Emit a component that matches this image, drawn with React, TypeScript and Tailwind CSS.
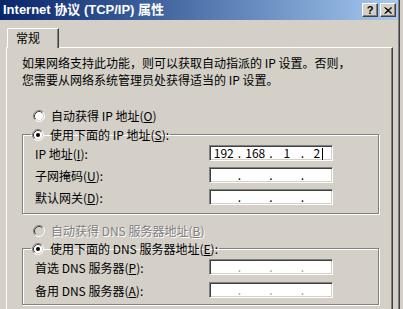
import React from "react";

const cjk = { fontFamily: '"Noto Sans CJK SC", "Liberation Sans", sans-serif' };

const Radio = ({ checked = false, disabled = false }: { checked?: boolean; disabled?: boolean }) => (
  <svg width="12" height="12" viewBox="0 0 12 12" className="shrink-0">
    <circle cx="6" cy="6" r="5" fill={disabled ? "#d4d0c8" : "#fff"} />
    <path d="M2.11 9.89 A5.5 5.5 0 0 1 9.89 2.11" stroke="#808080" fill="none" />
    <path d="M9.89 2.11 A5.5 5.5 0 0 1 2.11 9.89" stroke="#fff" fill="none" />
    <path d="M2.82 9.18 A4.5 4.5 0 0 1 9.18 2.82" stroke="#404040" fill="none" />
    <path d="M9.18 2.82 A4.5 4.5 0 0 1 2.82 9.18" stroke="#d4d0c8" fill="none" />
    {checked && <circle cx="6" cy="6" r="2" fill="#000" />}
  </svg>
);

const IpBox = ({ parts, cursor = false, dim = false }: { parts?: string[]; cursor?: boolean; dim?: boolean }) => {
  const p = parts ?? ["", "", "", ""];
  return (
    <div className="w-[124px] h-[16px] bg-white border-t border-l border-[#808080] border-b border-r border-b-white border-r-white shadow-[inset_1px_1px_0_#404040,inset_-1px_-1px_0_#d4d0c8] flex items-center text-[12px] leading-[14px] text-black">
      {p.map((v, i) => (
        <React.Fragment key={i}>
          <span className="flex-1 text-center relative">
            {v}
            {cursor && i === 3 && <span className="inline-block w-px h-[12px] bg-black align-middle ml-[2px]" />}
          </span>
          {i < 3 && <span className={"w-[4px] text-center " + (dim ? "text-[#a0a0a0]" : "")}>.</span>}
        </React.Fragment>
      ))}
    </div>
  );
};

const Row = ({ label, children }: { label: React.ReactNode; children: React.ReactNode }) => (
  <div className="flex items-center h-[16px]">
    <span className="w-[174px] text-[12px] leading-[15px]">{label}</span>
    {children}
  </div>
);

const Group = ({ legend, children, className }: { legend: React.ReactNode; children: React.ReactNode; className: string }) => (
  <fieldset className={"w-[357px] border border-[#808080] shadow-[1px_1px_0_#fff,inset_1px_1px_0_#fff] px-[12px] " + className}>
    <legend className="-ml-[4px] px-[1px] flex items-center gap-[6px] text-[12px] leading-[15px]">
      <Radio checked />
      <span>{legend}</span>
    </legend>
    {children}
  </fieldset>
);

export default function App() {
  return (
    <div className="w-[403px] h-[309px] overflow-hidden bg-[#d4d0c8] flex text-black" style={cjk}>
      <div className="w-[398px] flex flex-col">
        <div className="h-[20px] shrink-0 flex items-center justify-between pl-[3px] pr-[2px] bg-gradient-to-r from-[#0a246a] to-[#a6caf0]">
          <span className="text-white font-bold text-[13px] leading-[16px]" style={{ fontFamily: '"Liberation Sans", "Noto Sans CJK SC", sans-serif' }}>
            Internet 协议 (TCP/IP) 属性
          </span>
          <div className="flex gap-[2px]">
            <div className="w-[16px] h-[14px] bg-[#d4d0c8] border-t border-l border-white border-b border-r border-b-[#404040] border-r-[#404040] shadow-[inset_-1px_-1px_0_#808080] flex items-center justify-center text-[11px] leading-[11px] font-bold" style={{ fontFamily: '"Liberation Sans", sans-serif' }}>
              ?
            </div>
            <div className="w-[16px] h-[14px] bg-[#d4d0c8] border-t border-l border-white border-b border-r border-b-[#404040] border-r-[#404040] shadow-[inset_-1px_-1px_0_#808080] flex items-center justify-center">
              <svg width="8" height="7" viewBox="0 0 8 7">
                <path d="M0.5 0.5 L7 6.5 M1.5 0.5 L8 6.5 M7 0.5 L0.5 6.5 M8 0.5 L1.5 6.5" stroke="#000" strokeWidth="1" />
              </svg>
            </div>
          </div>
        </div>

        <div className="pl-[6px] pt-[7px] flex flex-col">
          <div className="flex h-[20px] items-end">
            <div className="ml-[1px] -mb-px z-10 w-[52px] h-[20px] bg-[#d4d0c8] border-t border-l border-white border-r border-r-[#404040] shadow-[inset_-1px_0_0_#808080] rounded-tl-[2px] pl-[8px] pt-[1px] text-[12px] leading-[15px]">
              常规
            </div>
          </div>
          <div className="w-[387px] h-[270px] border-t border-l border-white border-r border-r-[#404040] shadow-[inset_-1px_0_0_#808080] pl-[15px] pt-[6px] flex flex-col">
            <div className="text-[12px] leading-[17px] flex flex-col">
              <span>如果网络支持此功能，则可以获取自动指派的 IP 设置。否则，</span>
              <span>您需要从网络系统管理员处获得适当的 IP 设置。</span>
            </div>

            <div className="mt-[20px] ml-[11px] flex items-center gap-[6px] h-[15px] text-[12px] leading-[15px]">
              <Radio />
              <span>自动获得 IP 地址(<u>O</u>)</span>
            </div>

            <Group legend={<>使用下面的 IP 地址(<u>S</u>):</>} className="mt-[4px] pt-[3px] pb-[8px]">
              <div className="flex flex-col gap-[6px]">
                <Row label={<>IP 地址(<u>I</u>):</>}>
                  <IpBox parts={["192", "168", "1", "2"]} cursor />
                </Row>
                <Row label={<>子网掩码(<u>U</u>):</>}>
                  <IpBox />
                </Row>
                <Row label={<>默认网关(<u>D</u>):</>}>
                  <IpBox />
                </Row>
              </div>
            </Group>

            <div className="mt-[9px] ml-[11px] flex items-center gap-[6px] h-[15px] text-[12px] leading-[15px] text-[#808080] [text-shadow:1px_1px_0_#fff]">
              <Radio disabled />
              <span>自动获得 DNS 服务器地址(<u>B</u>)</span>
            </div>

            <Group legend={<>使用下面的 DNS 服务器地址(<u>E</u>):</>} className="mt-[3px] pt-[3px] pb-[6px]">
              <div className="flex flex-col gap-[7px]">
                <Row label={<>首选 DNS 服务器(<u>P</u>):</>}>
                  <IpBox dim />
                </Row>
                <Row label={<>备用 DNS 服务器(<u>A</u>):</>}>
                  <IpBox dim />
                </Row>
              </div>
            </Group>
          </div>
        </div>
      </div>
      <div className="w-[5px] border-l border-[#808080] shadow-[inset_1px_0_0_#404040]" />
    </div>
  );
}
